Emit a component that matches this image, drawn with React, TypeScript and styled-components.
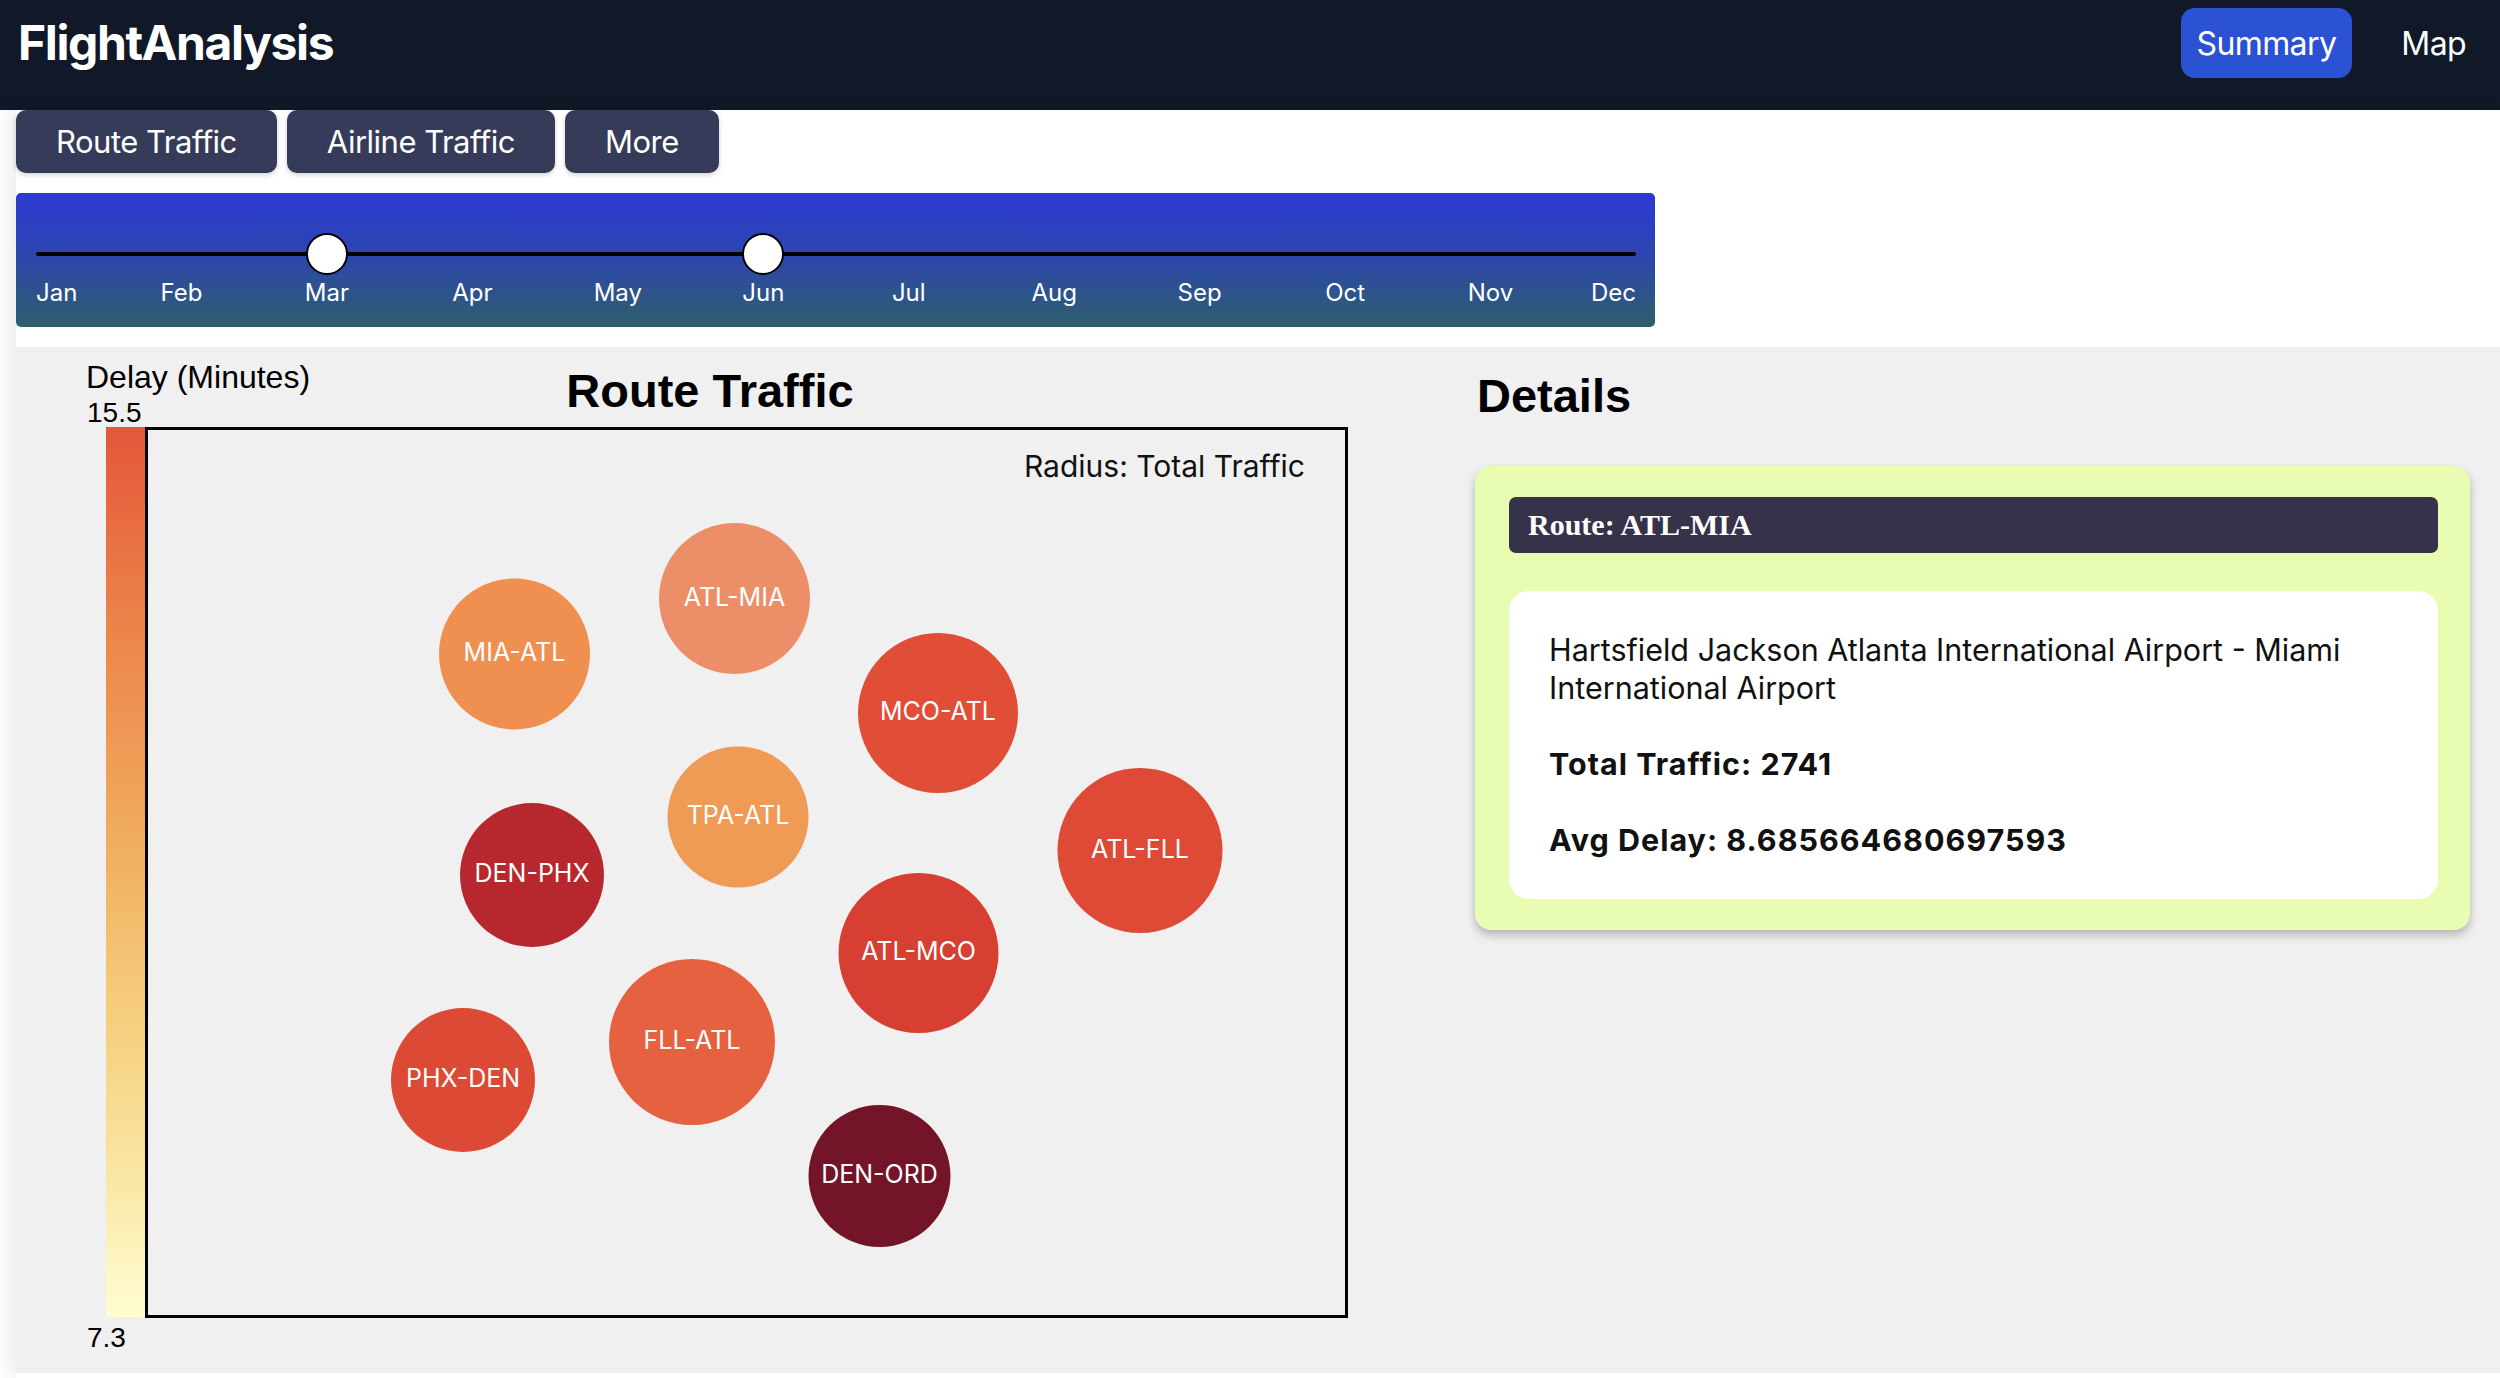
import React from "react";
import styled, { createGlobalStyle } from "styled-components";

const GlobalStyle = createGlobalStyle`
  html, body { margin: 0; padding: 0; background: #ffffff; }
  body { font-family: Inter, "Noto Sans", sans-serif; color: #111; }
  * { box-sizing: border-box; }
`;

const Header = styled.header`
  height: 110px;
  background: #111827;
  display: flex;
  justify-content: space-between;
  align-items: flex-start;
  padding: 8px 18px 0 18px;
`;

const Brand = styled.h1`
  margin: 0;
  font-family: Inter, sans-serif;
  font-size: 48px;
  line-height: 70px;
  font-weight: 700;
  color: #ffffff;
  letter-spacing: -1.4px;
`;

const Nav = styled.nav`
  display: flex;
  gap: 33px;
`;

const NavButton = styled.button<{ $active?: boolean }>`
  height: 70px;
  padding: 0 16px;
  border: none;
  border-radius: 14px;
  background: ${(p) => (p.$active ? "#2b52d3" : "transparent")};
  color: #ffffff;
  font-family: Inter, sans-serif;
  font-size: 32px;
  font-weight: 400;
  letter-spacing: -0.6px;
  cursor: pointer;
`;

const Content = styled.main`
  margin-left: 16px;
  background: #ffffff;
  box-shadow: -8px 0 16px rgba(0, 0, 0, 0.07);
  padding-bottom: 5px;
`;

const Tabs = styled.div`
  display: flex;
  gap: 10px;
`;

const Tab = styled.button`
  height: 63px;
  padding: 0 40px;
  background: #353b59;
  color: #ffffff;
  border: none;
  border-radius: 10px;
  font-family: Inter, sans-serif;
  font-size: 31px;
  font-weight: 400;
  letter-spacing: -0.5px;
  box-shadow: 0 2px 5px rgba(0, 0, 0, 0.18);
  cursor: pointer;
`;

const SliderPanel = styled.section`
  margin-top: 20px;
  width: 1639px;
  height: 134px;
  border-radius: 5px;
  background: linear-gradient(180deg, #2b3ad2 0%, #2c45b0 45%, #2e5f6b 100%);
  padding: 0 19px 0 20px;
  overflow: hidden;
`;

const Track = styled.div`
  position: relative;
  margin-top: 59px;
  height: 4px;
  background: #000000;
  border-radius: 2px;
`;

const Handle = styled.div`
  position: absolute;
  top: 50%;
  width: 42px;
  height: 42px;
  border-radius: 50%;
  background: #ffffff;
  border: 2px solid #000000;
  transform: translate(-50%, -50%);
`;

const MonthRow = styled.div`
  display: flex;
  justify-content: space-between;
  margin-top: 22px;
`;

const Month = styled.div<{ $align: "flex-start" | "center" | "flex-end" }>`
  width: 0;
  display: flex;
  justify-content: ${(p) => p.$align};
  white-space: nowrap;
  color: #ffffff;
  font-family: Inter, sans-serif;
  font-size: 24px;
  line-height: 29px;
`;

const Board = styled.section`
  margin-top: 20px;
  height: 1026px;
  background: #f0f0f0;
  display: flex;
`;

const ChartSvg = styled.svg`
  flex: 0 0 1459px;
  display: block;
`;

const DetailsColumn = styled.aside`
  flex: 1;
  padding: 25px 30px 0 0;
`;

const DetailsTitle = styled.h2`
  margin: 0 0 47px 2px;
  font-family: "Liberation Sans", Arial, sans-serif;
  font-size: 47px;
  line-height: 47px;
  font-weight: 700;
  color: #000;
`;

const Card = styled.div`
  background: #e8fdb1;
  border-radius: 16px;
  padding: 31px 32px 31px 34px;
  box-shadow: 0 5px 10px rgba(0, 0, 0, 0.25);
`;

const RouteBar = styled.div`
  height: 56px;
  background: #36324a;
  border-radius: 7px;
  padding-left: 19px;
  display: flex;
  align-items: center;
  color: #ffffff;
  font-family: "Liberation Serif", "Times New Roman", serif;
  font-weight: 700;
  font-size: 30px;
`;

const InfoCard = styled.div`
  margin-top: 38px;
  background: #ffffff;
  border-radius: 20px;
  padding: 40px;
  font-family: Inter, sans-serif;
  font-size: 30.5px;
  line-height: 38px;
  color: #111;
`;

const InfoLine = styled.p<{ $bold?: boolean }>`
  margin: 0;
  font-weight: ${(p) => (p.$bold ? 700 : 400)};
  letter-spacing: ${(p) => (p.$bold ? "1px" : "0")};
  & + & {
    margin-top: 38px;
  }
`;

const months = ["Jan", "Feb", "Mar", "Apr", "May", "Jun", "Jul", "Aug", "Sep", "Oct", "Nov", "Dec"];
const handles = [2, 5];

type Bubble = { label: string; cx: number; cy: number; r: number; color: string };

const bubbles: Bubble[] = [
  { label: "MIA-ATL", cx: 498.5, cy: 307, r: 75.5, color: "#ef9050" },
  { label: "ATL-MIA", cx: 718.5, cy: 251.5, r: 75.5, color: "#ec8f68" },
  { label: "MCO-ATL", cx: 922, cy: 366, r: 80, color: "#e04e37" },
  { label: "TPA-ATL", cx: 722, cy: 470, r: 70.5, color: "#ef9a55" },
  { label: "DEN-PHX", cx: 516, cy: 528, r: 72, color: "#b7282e" },
  { label: "ATL-FLL", cx: 1124, cy: 503.5, r: 82.5, color: "#df4a37" },
  { label: "ATL-MCO", cx: 902.5, cy: 606, r: 80, color: "#d63f31" },
  { label: "FLL-ATL", cx: 676, cy: 695, r: 83, color: "#e66140" },
  { label: "PHX-DEN", cx: 447, cy: 733, r: 72, color: "#dc4a35" },
  { label: "DEN-ORD", cx: 863.5, cy: 829, r: 71, color: "#741428" },
];

const RouteChart: React.FC = () => (
  <ChartSvg width={1459} height={1026} viewBox="0 0 1459 1026">
    <defs>
      <linearGradient id="delayScale" x1="0" y1="0" x2="0" y2="1">
        <stop offset="0" stopColor="#e3573a" />
        <stop offset="0.22" stopColor="#ec8349" />
        <stop offset="0.45" stopColor="#f0aa5e" />
        <stop offset="0.65" stopColor="#f5cc7a" />
        <stop offset="0.82" stopColor="#f9e39e" />
        <stop offset="1" stopColor="#fffdd2" />
      </linearGradient>
    </defs>
    <g fontFamily="'Liberation Sans', Arial, sans-serif" fill="#000">
      <text x={70} y={41} fontSize={32}>Delay (Minutes)</text>
      <text x={71} y={75} fontSize={28}>15.5</text>
      <text x={71} y={1000} fontSize={28}>7.3</text>
      <text x={694} y={60} fontSize={47} fontWeight={700} textAnchor="middle">Route Traffic</text>
    </g>
    <rect x={90} y={80} width={40} height={890} fill="url(#delayScale)" />
    <rect x={130.5} y={81.5} width={1200} height={888} fill="none" stroke="#000" strokeWidth={3} />
    <text x={1289} y={130} fontSize={30} fontFamily="Inter, sans-serif" textAnchor="end" fill="#111">
      Radius: Total Traffic
    </text>
    {bubbles.map((b) => (
      <g key={b.label}>
        <circle cx={b.cx} cy={b.cy} r={b.r} fill={b.color} />
        <text
          x={b.cx}
          y={b.cy + 7}
          fontSize={25}
          fontFamily="Inter, sans-serif"
          textAnchor="middle"
          fill="#ffffff"
        >
          {b.label}
        </text>
      </g>
    ))}
  </ChartSvg>
);

export default function App() {
  return (
    <>
      <GlobalStyle />
      <Header>
        <Brand>FlightAnalysis</Brand>
        <Nav>
          <NavButton $active>Summary</NavButton>
          <NavButton>Map</NavButton>
        </Nav>
      </Header>
      <Content>
        <Tabs>
          <Tab>Route Traffic</Tab>
          <Tab>Airline Traffic</Tab>
          <Tab>More</Tab>
        </Tabs>
        <SliderPanel>
          <Track>
            {handles.map((h) => (
              <Handle key={h} style={{ left: `${(h / (months.length - 1)) * 100}%` }} />
            ))}
          </Track>
          <MonthRow>
            {months.map((m, i) => (
              <Month
                key={m}
                $align={i === 0 ? "flex-start" : i === months.length - 1 ? "flex-end" : "center"}
              >
                {m}
              </Month>
            ))}
          </MonthRow>
        </SliderPanel>
        <Board>
          <RouteChart />
          <DetailsColumn>
            <DetailsTitle>Details</DetailsTitle>
            <Card>
              <RouteBar>Route: ATL-MIA</RouteBar>
              <InfoCard>
                <InfoLine>Hartsfield Jackson Atlanta International Airport - Miami International Airport</InfoLine>
                <InfoLine $bold>Total Traffic: 2741</InfoLine>
                <InfoLine $bold>Avg Delay: 8.685664680697593</InfoLine>
              </InfoCard>
            </Card>
          </DetailsColumn>
        </Board>
      </Content>
    </>
  );
}
